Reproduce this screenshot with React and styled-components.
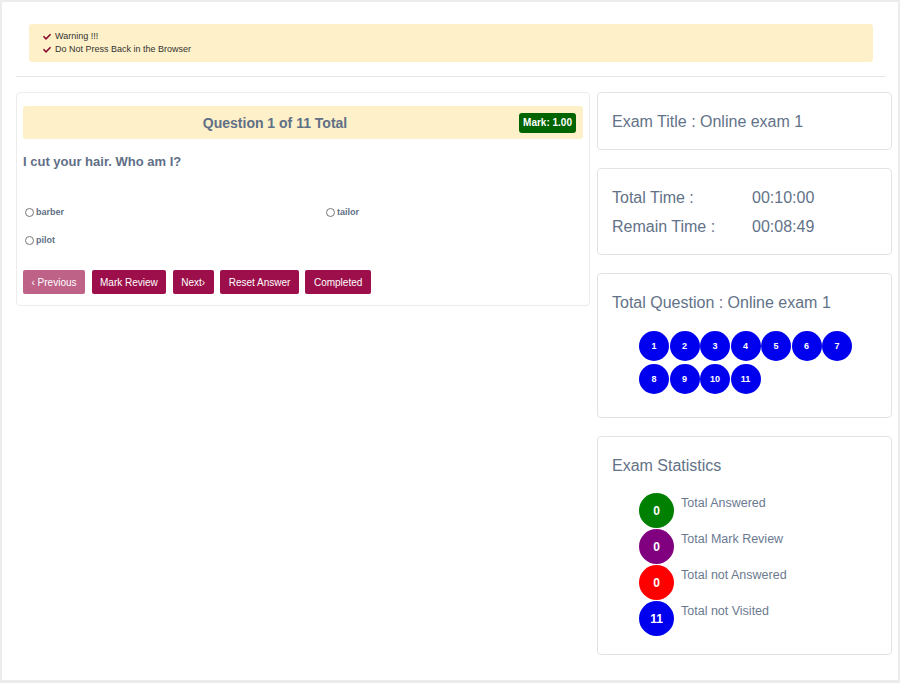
import React from "react";
import styled, { createGlobalStyle } from "styled-components";

const Global = createGlobalStyle`
  html, body { margin: 0; padding: 0; background: #fff; }
  body { font-family: "Liberation Sans", Arial, sans-serif; }
  * { box-sizing: border-box; }
`;

const Frame = styled.div`
  width: 900px;
  height: 683px;
  border: 2px solid #ececec;
  border-bottom-width: 3px;
  background: #fff;
  overflow: hidden;
`;

const Top = styled.div`
  padding: 22px 12px 0 14px;
`;

const Alert = styled.div`
  margin: 0 13px;
  height: 38px;
  background: #fef0c8;
  border-radius: 3px;
  padding: 7px 14px;
  display: flex;
  flex-direction: column;
  justify-content: center;
  gap: 2px;
`;

const AlertLine = styled.div`
  display: flex;
  align-items: center;
  gap: 4px;
  font-size: 9px;
  line-height: 11px;
  color: #333;
`;

const Rule = styled.div`
  height: 1px;
  background: #e6e6e6;
  margin-top: 14px;
`;

const Main = styled.div`
  display: flex;
  align-items: flex-start;
  gap: 7px;
  padding: 15px 0 0 14px;
`;

const LeftCard = styled.div`
  width: 574px;
  border: 1px solid #ececec;
  border-radius: 4px;
  padding: 13px 6px 11px 6px;
`;

const QHeader = styled.div`
  height: 33px;
  background: #fef0c8;
  border-radius: 3px;
  display: flex;
  align-items: center;
  padding: 0 7px 0 8px;
`;

const QTitle = styled.div`
  flex: 1;
  text-align: center;
  font-weight: bold;
  font-size: 14px;
  color: #5f6f86;
`;

const MarkBadge = styled.span`
  height: 20px;
  padding: 0 4px;
  display: flex;
  align-items: center;
  background: #006400;
  color: #fff;
  font-size: 10px;
  font-weight: bold;
  border-radius: 3px;
`;

const QText = styled.div`
  margin-top: 15px;
  font-size: 13px;
  font-weight: bold;
  color: #5f6f86;
  line-height: 16px;
`;

const Options = styled.div`
  display: grid;
  grid-template-columns: 301px 1fr;
  row-gap: 12px;
  margin-top: 34px;
  padding-left: 2px;
`;

const Option = styled.label`
  display: flex;
  align-items: center;
  gap: 2px;
  font-size: 9px;
  font-weight: bold;
  color: #5f6f86;
  height: 16px;
`;

const Radio = styled.input.attrs({ type: "radio" })`
  appearance: none;
  margin: 0;
  width: 9px;
  height: 9px;
  border: 1px solid #777;
  border-radius: 50%;
  background: #fff;
`;

const Buttons = styled.div`
  display: flex;
  gap: 6.5px;
  margin-top: 22px;
`;

const Btn = styled.button`
  height: 24px;
  padding: 0 8.5px;
  border: none;
  border-radius: 2px;
  background: #9c0f4a;
  color: #fff;
  font-family: "Liberation Sans", Arial, sans-serif;
  font-size: 10px;
  opacity: ${(p) => (p.$disabled ? 0.65 : 1)};
  display: flex;
  align-items: center;
  gap: 1px;
`;

const Right = styled.div`
  width: 295px;
  display: flex;
  flex-direction: column;
  gap: 18px;
`;

const Card = styled.div`
  border: 1px solid #e3e3e3;
  border-radius: 4px;
  padding: ${(p) => p.$pad || "18px 14px"};
`;

const CardTitle = styled.div`
  font-size: 16px;
  line-height: 20px;
  color: #627288;
`;

const TimeRow = styled.div`
  display: flex;
  font-size: 16px;
  line-height: 29px;
  color: #627288;
`;

const TimeLabel = styled.span`
  width: 140px;
`;

const Bubbles = styled.div`
  display: grid;
  grid-template-columns: repeat(7, 30.5px);
  row-gap: 3px;
  margin: 18px 0 0 27px;
`;

const Bubble = styled.div`
  width: 30px;
  height: 30px;
  border-radius: 50%;
  background: #0000ee;
  color: #fff;
  font-size: 9px;
  font-weight: bold;
  display: flex;
  align-items: center;
  justify-content: center;
`;

const Stats = styled.div`
  display: flex;
  flex-direction: column;
  gap: 1px;
  margin: 17px 0 0 27px;
`;

const StatRow = styled.div`
  display: flex;
  align-items: flex-start;
  gap: 7px;
`;

const StatDot = styled.div`
  width: 35px;
  height: 35px;
  border-radius: 50%;
  background: ${(p) => p.$color};
  color: #fff;
  font-size: 12px;
  font-weight: bold;
  display: flex;
  align-items: center;
  justify-content: center;
`;

const StatLabel = styled.div`
  font-size: 12.5px;
  color: #6b7a90;
  line-height: 14px;
  margin-top: 3px;
`;

const Check = () => (
  <svg width="8" height="7" viewBox="0 0 512 420">
    <path
      fill="#8a0b2c"
      d="M173.9 411.4L7.5 245c-10-10-10-26.2 0-36.2l36.2-36.2c10-10 26.2-10 36.2 0L192 284.7 432.1 44.6c10-10 26.2-10 36.2 0l36.2 36.2c10 10 10 26.2 0 36.2L210.1 411.4c-10 10-26.2 10-36.2 0z"
    />
  </svg>
);

const stats = [
  { c: "#008000", n: 0, l: "Total Answered" },
  { c: "#800080", n: 0, l: "Total Mark Review" },
  { c: "#ff0000", n: 0, l: "Total not Answered" },
  { c: "#0000ee", n: 11, l: "Total not Visited" },
];

export default function App() {
  return (
    <>
      <Global />
      <Frame>
        <Top>
          <Alert>
            <AlertLine>
              <Check /> Warning !!!
            </AlertLine>
            <AlertLine>
              <Check /> Do Not Press Back in the Browser
            </AlertLine>
          </Alert>
          <Rule />
        </Top>
        <Main>
          <LeftCard>
            <QHeader>
              <QTitle>Question 1 of 11 Total</QTitle>
              <MarkBadge>Mark: 1.00</MarkBadge>
            </QHeader>
            <QText>I cut your hair. Who am I?</QText>
            <Options>
              <Option>
                <Radio name="a" /> barber
              </Option>
              <Option>
                <Radio name="a" /> tailor
              </Option>
              <Option>
                <Radio name="a" /> pilot
              </Option>
            </Options>
            <Buttons>
              <Btn $disabled>‹ Previous</Btn>
              <Btn>Mark Review</Btn>
              <Btn>Next›</Btn>
              <Btn>Reset Answer</Btn>
              <Btn>Completed</Btn>
            </Buttons>
          </LeftCard>
          <Right>
            <Card $pad="19px 14px 17px">
              <CardTitle>Exam Title : Online exam 1</CardTitle>
            </Card>
            <Card $pad="14px 14px 13px">
              <TimeRow>
                <TimeLabel>Total Time :</TimeLabel>
                <span>00:10:00</span>
              </TimeRow>
              <TimeRow>
                <TimeLabel>Remain Time :</TimeLabel>
                <span>00:08:49</span>
              </TimeRow>
            </Card>
            <Card $pad="19px 14px 23px">
              <CardTitle>Total Question : Online exam 1</CardTitle>
              <Bubbles>
                {Array.from({ length: 11 }, (_, i) => (
                  <Bubble key={i}>{i + 1}</Bubble>
                ))}
              </Bubbles>
            </Card>
            <Card $pad="19px 14px 18px">
              <CardTitle>Exam Statistics</CardTitle>
              <Stats>
                {stats.map((s) => (
                  <StatRow key={s.l}>
                    <StatDot $color={s.c}>{s.n}</StatDot>
                    <StatLabel>{s.l}</StatLabel>
                  </StatRow>
                ))}
              </Stats>
            </Card>
          </Right>
        </Main>
      </Frame>
    </>
  );
}
